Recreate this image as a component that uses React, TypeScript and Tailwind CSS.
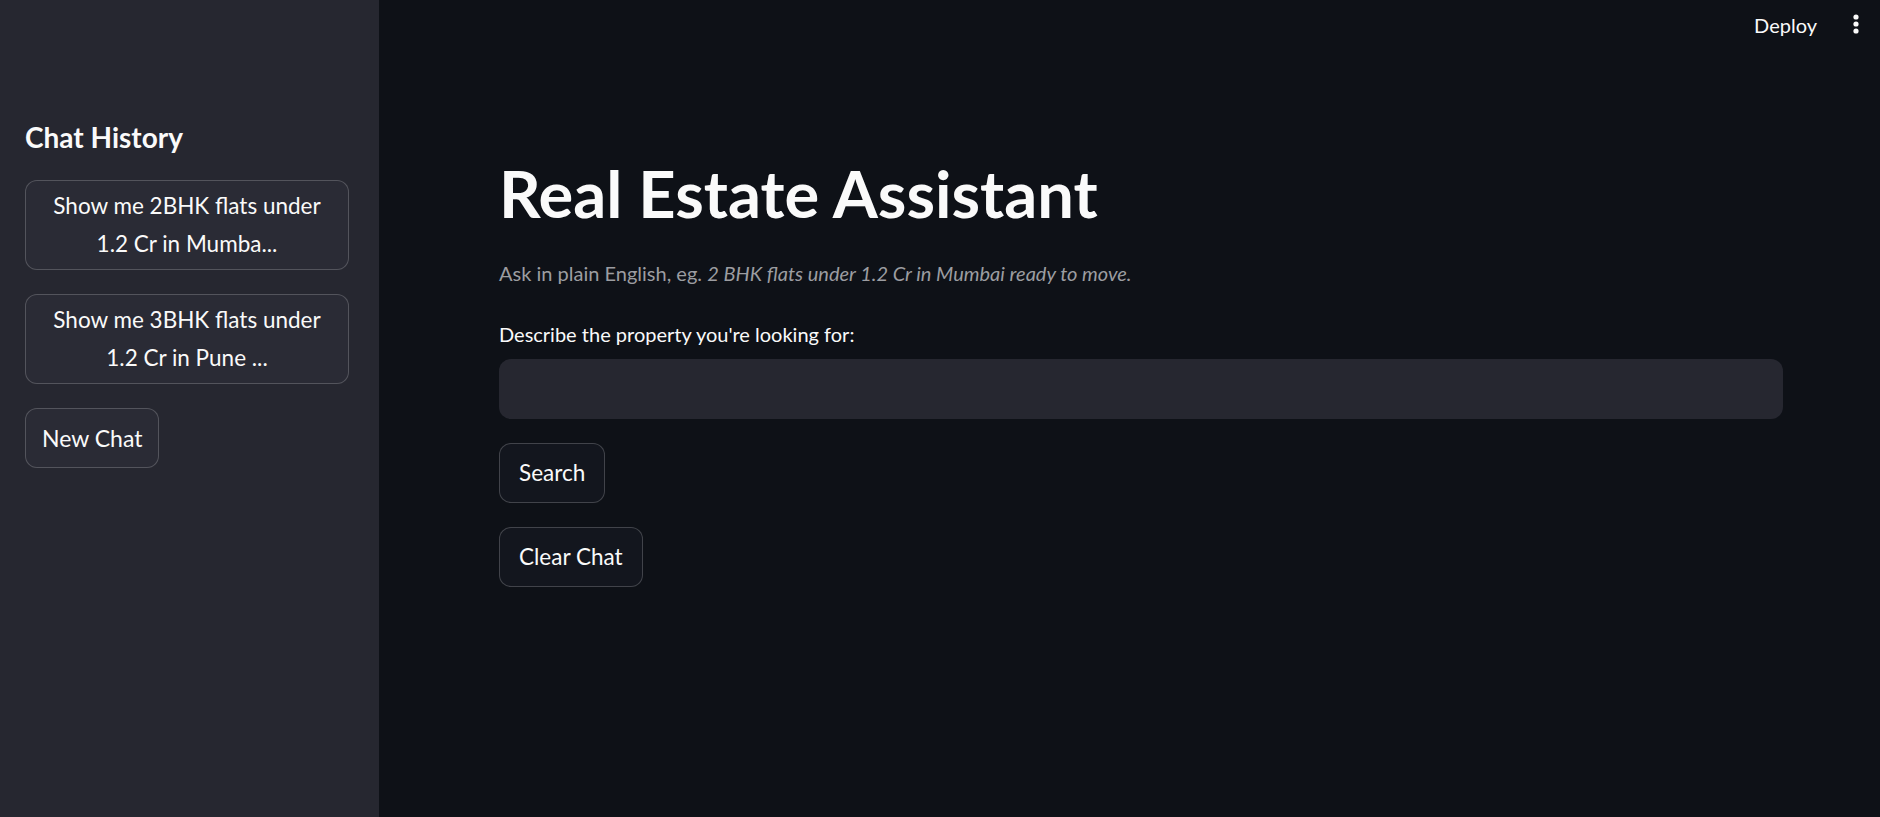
import { useState } from 'react';

const historyItems = [
  { id: 1, lines: ['Show me 2BHK flats under', '1.2 Cr in Mumba...'] },
  { id: 2, lines: ['Show me 3BHK flats under', '1.2 Cr in Pune ...'] },
];

function SideButton({ lines }: { lines: string[] }) {
  return (
    <button className="w-full rounded-[12px] border border-[#fafafa33] bg-[#2a2b35] px-[18px] py-[6px] text-center text-[22.5px] leading-[38px] text-[#fafafa]">
      {lines.map((l) => (
        <span key={l} className="block">
          {l}
        </span>
      ))}
    </button>
  );
}

function MainButton({ label }: { label: string }) {
  return (
    <button className="flex min-h-[60px] items-center rounded-[12px] border border-[#fafafa33] bg-[#13161e] px-[19px] text-[22.5px] leading-[38px] text-[#fafafa]">
      {label}
    </button>
  );
}

export default function App() {
  const [query, setQuery] = useState('');

  return (
    <div className="flex h-[817px] w-full overflow-hidden bg-[#0e1117] font-['Lato',sans-serif] text-[#fafafa]">
      {/* Sidebar */}
      <aside className="flex w-[379px] shrink-0 flex-col bg-[#262730] pl-[25px] pr-[30px] pt-[119px]">
        <h3 className="text-[28px] font-bold leading-[36px]">Chat History</h3>
        <div className="mt-[25px] flex flex-col items-start gap-[24px]">
          {historyItems.map((item) => (
            <SideButton key={item.id} lines={item.lines} />
          ))}
          <button className="flex min-h-[60px] items-center rounded-[12px] border border-[#fafafa33] bg-[#2a2b35] px-[16px] text-[23px] leading-[38px] text-[#fafafa]">
            New Chat
          </button>
        </div>
      </aside>

      {/* Main */}
      <main className="flex min-w-0 flex-1 flex-col">
        {/* Top bar */}
        <div className="flex h-[52px] items-start justify-end pt-[9px] pr-[20px]">
          <span className="text-[20px] leading-[32px]">Deploy</span>
          <svg
            className="ml-[35px] mt-[4px]"
            width="8"
            height="22"
            viewBox="0 0 8 22"
            fill="#fafafa"
          >
            <circle cx="4" cy="4" r="2.6" />
            <circle cx="4" cy="11" r="2.6" />
            <circle cx="4" cy="18" r="2.6" />
          </svg>
        </div>

        <div className="flex flex-col items-start pl-[120px] pr-[97px] pt-[103px]">
          <h1 className="text-[65px] font-bold leading-[76px]">Real Estate Assistant</h1>
          <p className="mt-[26px] text-[20px] leading-[32px] text-[#9c9da1]">
            Ask in plain English, eg.{' '}
            <em>2 BHK flats under 1.2 Cr in Mumbai ready to move.</em>
          </p>
          <label className="mt-[29px] text-[20px] leading-[32px]">
            Describe the property you're looking for:
          </label>
          <input
            value={query}
            onChange={(e) => setQuery(e.target.value)}
            className="mt-[9px] h-[60px] w-full rounded-[12px] bg-[#262730] px-[18px] text-[23px] text-[#fafafa] outline-none"
          />
          <div className="mt-[24px]">
            <MainButton label="Search" />
          </div>
          <div className="mt-[24px]">
            <MainButton label="Clear Chat" />
          </div>
        </div>
      </main>
    </div>
  );
}
